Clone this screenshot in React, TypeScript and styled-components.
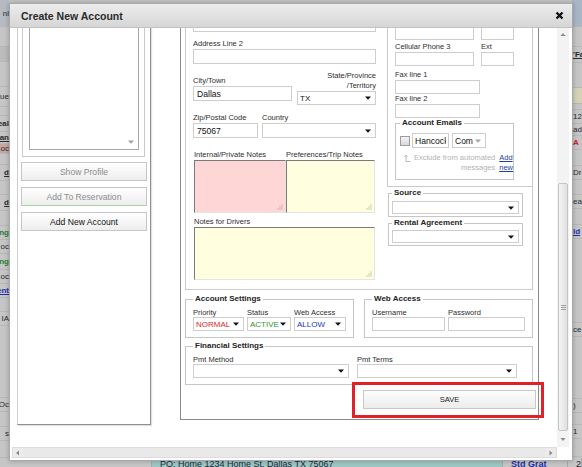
import React from 'react';
import styled, { createGlobalStyle } from 'styled-components';

const GlobalStyle = createGlobalStyle`
  * { box-sizing: border-box; }
  html, body { margin: 0; padding: 0; }
  body {
    width: 582px;
    height: 467px;
    overflow: hidden;
    background: #c6c6c6;
    font-family: 'Liberation Sans', Arial, sans-serif;
    color: #333;
  }
`;

const Screen = styled.div`
  position: relative;
  width: 582px;
  height: 467px;
  overflow: hidden;
  display: flex;
  flex-direction: column;
`;

/* ---------- app behind the modal ---------- */

const AppRow = styled.div`
  flex: 0 0 457px;
  display: flex;
  justify-content: space-between;
`;

const Strip = styled.div<{ $w: number }>`
  width: ${p => p.$w}px;
  display: flex;
  flex-direction: column;
  overflow: hidden;
`;

const StripRow = styled.div<{ $h: number; $bg?: string; $c?: string; $bold?: boolean; $u?: boolean; $end?: boolean }>`
  flex: 0 0 ${p => p.$h}px;
  display: flex;
  align-items: center;
  justify-content: ${p => (p.$end ? 'flex-end' : 'flex-start')};
  padding-left: ${p => (p.$end ? 0 : 1)}px;
  background: ${p => p.$bg || 'transparent'};
  border-bottom: 1px solid #b8b8b8;
  color: ${p => p.$c || '#2a2a2a'};
  font-size: 8px;
  font-weight: ${p => (p.$bold ? 700 : 400)};
  text-decoration: ${p => (p.$u ? 'underline' : 'none')};
  white-space: nowrap;
`;

const BottomBar = styled.div`
  flex: 0 0 10px;
  display: flex;
  font-size: 9px;
  line-height: 12px;
  white-space: nowrap;
  overflow: hidden;
`;

const BarCell = styled.div<{ $w: number; $bg: string; $c?: string; $bold?: boolean }>`
  flex: 0 0 ${p => p.$w}px;
  background: ${p => p.$bg};
  color: ${p => p.$c || '#1c2a3a'};
  font-weight: ${p => (p.$bold ? 700 : 400)};
  border-right: 1px solid #a9a9a9;
  padding: 0 0 0 8px;
  overflow: hidden;
`;

/* ---------- dialog frame ---------- */

const Dialog = styled.section`
  position: absolute;
  left: 9px;
  top: 3px;
  width: 564px;
  height: 458px;
  display: flex;
  flex-direction: column;
  background: #fff;
  border: 1px solid #a9a9a9;
  box-shadow: 0 0 5px rgba(0, 0, 0, 0.25);
`;

const TitleBar = styled.header`
  flex: 0 0 24px;
  display: flex;
  align-items: center;
  justify-content: space-between;
  padding: 0 8px 0 11px;
  background: linear-gradient(to bottom, #ececec, #d6d6d6);
  border-bottom: 1px solid #c2c2c2;
`;

const Title = styled.h1`
  margin: 0;
  font-size: 10.5px;
  font-weight: 700;
  color: #2b2b2b;
`;

const CloseButton = styled.button`
  border: 0;
  background: none;
  padding: 0;
  width: 9px;
  height: 9px;
  display: flex;
`;

const Body = styled.div`
  flex: 1;
  min-height: 0;
  display: grid;
  grid-template-columns: 1fr 12px;
  grid-template-rows: 1fr 11px;
  padding: 0 3px 2px 0;
`;

const Viewport = styled.div`
  overflow: hidden;
  min-height: 0;
`;

const Content = styled.div`
  display: flex;
  align-items: flex-start;
  margin-top: -41px;
  padding-left: 7px;
`;

/* ---------- scrollbars ---------- */

const VScroll = styled.div`
  display: flex;
  flex-direction: column;
  background: #f3f3f3;
`;

const ScrollArrow = styled.div`
  flex: 0 0 14px;
  display: flex;
  align-items: center;
  justify-content: center;
`;

const VTrack = styled.div`
  flex: 1;
  display: flex;
  flex-direction: column;
  padding: 141px 1px 1px;
`;

const VThumb = styled.div`
  height: 248px;
  border: 1px solid #c4c4c4;
  border-radius: 2px;
  background: linear-gradient(to right, #f4f4f4, #e0e0e0);
  display: flex;
  align-items: center;
  justify-content: center;
`;

const HScroll = styled.div`
  display: flex;
  align-items: stretch;
  margin-left: 2px;
  background: #ececec;
  border: 1px solid #dcdcdc;
`;

const HArrow = styled.div`
  flex: 0 0 10px;
  display: flex;
  align-items: center;
  justify-content: center;
`;

const HThumb = styled.div`
  flex: 1;
  background: #e9e9e9;
`;

const Corner = styled.div`
  background: #fff;
`;

/* ---------- left side panel ---------- */

const SidePanel = styled.aside`
  flex: 0 0 134px;
  height: 438px;
  border: 1px solid #cdcdcd;
  border-right-color: #8f8f8f;
  border-bottom-color: #8f8f8f;
  box-shadow: 1px 1px 1px rgba(0, 0, 0, 0.12);
  padding: 0 3px;
  display: flex;
  flex-direction: column;
`;

const ListFrame = styled.div`
  height: 169px;
  margin: 0 2px 0 1px;
  border: 1px solid #c9c9c9;
  padding: 6px 5px 6px 6px;
  display: flex;
`;

const ListBox = styled.div`
  flex: 1;
  border: 1px solid #a8a8a8;
  display: flex;
  align-items: flex-end;
  justify-content: flex-end;
  padding: 0 4px 5px 0;
`;

const ButtonStack = styled.div`
  display: flex;
  flex-direction: column;
  gap: 6px;
  margin-top: 5px;
`;

const SideButton = styled.button<{ $muted?: boolean; $accent?: boolean }>`
  height: 19px;
  padding: 0;
  border: 1px solid #c6c6c6;
  border-bottom-color: ${p => (p.$accent ? '#a9d6a0' : '#c6c6c6')};
  background: linear-gradient(to bottom, #ffffff, #ededed);
  font-family: 'Liberation Sans', Arial, sans-serif;
  font-size: 8.6px;
  color: ${p => (p.$muted ? '#8c8c8c' : '#111')};
`;

/* ---------- main form panel ---------- */

const FormPanel = styled.div`
  flex: 0 0 359px;
  margin-left: 29px;
  border: 1px solid #8a8a8a;
  padding: 0 5px 10px 4px;
  display: flex;
  flex-direction: column;
`;

const TopBox = styled.div`
  margin-top: 6px;
  border: 1px solid #cbcbcb;
  display: flex;
  gap: 11px;
`;

const AddressCol = styled.div`
  flex: 0 0 190px;
  padding: 12px 0 9px 7px;
  display: flex;
  flex-direction: column;
`;

const RightCol = styled.div`
  flex: 0 0 145px;
  display: flex;
  flex-direction: column;
  align-items: flex-start;
`;

const PhonesBox = styled.div`
  align-self: stretch;
  border-left: 1px solid #cbcbcb;
  border-bottom: 1px solid #cbcbcb;
  padding: 21px 0 6px 7px;
  display: flex;
  flex-direction: column;
  align-items: flex-start;
`;

const FieldRow = styled.div<{ $mt?: number; $gap?: number; $end?: boolean; $px?: number }>`
  display: flex;
  gap: ${p => p.$gap || 0}px;
  margin-top: ${p => p.$mt || 0}px;
  align-items: ${p => (p.$end ? 'flex-end' : 'flex-start')};
  padding: 0 ${p => p.$px || 0}px;
`;

const Field = styled.div<{ $w?: number; $mt?: number; $pb?: number }>`
  display: flex;
  flex-direction: column;
  flex-shrink: 0;
  width: ${p => (p.$w ? `${p.$w}px` : '100%')};
  margin-top: ${p => p.$mt || 0}px;
  padding-bottom: ${p => p.$pb || 0}px;
`;

const Label = styled.div<{ $right?: boolean; $h?: number }>`
  font-size: 7.5px;
  line-height: ${p => p.$h || 10}px;
  color: #2e2e2e;
  white-space: nowrap;
  text-align: ${p => (p.$right ? 'right' : 'left')};
`;

const TextInput = styled.input<{ $h?: number }>`
  display: block;
  width: 100%;
  height: ${p => p.$h || 15}px;
  margin: 0;
  padding: 0 3px;
  border: 1px solid #cdcdcd;
  background: #fff;
  font-family: 'Liberation Sans', Arial, sans-serif;
  font-size: 8.6px;
  color: #111;
  outline: none;
`;

const SelectBox = styled.div<{ $w?: number; $h?: number; $c?: string }>`
  flex-shrink: 0;
  width: ${p => (p.$w ? `${p.$w}px` : '100%')};
  height: ${p => p.$h || 14}px;
  border: 1px solid #cdcdcd;
  background: #fff;
  display: flex;
  align-items: center;
  gap: 1px;
  padding: 0 4px 0 2px;
  font-size: 8px;
  color: ${p => p.$c || '#111'};
  white-space: nowrap;
`;

const SelectValue = styled.span`
  flex: 1;
  min-width: 0;
  overflow: hidden;
`;

const NoteArea = styled.div<{ $bg: string; $h?: number }>`
  height: ${p => p.$h || 53}px;
  background: ${p => p.$bg};
  border: 1px solid #e4e4e4;
  border-top-color: #7a7a7a;
  border-left-color: #7a7a7a;
  display: flex;
  align-items: flex-end;
  justify-content: flex-end;
  padding: 0 2px 2px 0;
`;

const NotesGrid = styled.div`
  display: grid;
  grid-template-columns: 92px 89px;
  margin-top: 12px;
  padding-left: 1px;
`;

const GroupSet = styled.fieldset<{ $w?: number; $mt?: number; $ml?: number; $pad: string }>`
  margin: ${p => p.$mt || 0}px 0 0 ${p => p.$ml || 0}px;
  min-width: 0;
  flex-shrink: 0;
  width: ${p => (p.$w ? `${p.$w}px` : 'auto')};
  padding: ${p => p.$pad};
  border: 1px solid #c6c6c6;
`;

const Legend = styled.legend`
  padding: 0 2px;
  font-size: 8px;
  line-height: 10px;
  font-weight: 700;
  color: #242424;
`;

const CheckBox = styled.div`
  flex: 0 0 10px;
  height: 10px;
  margin-top: 3px;
  border: 1px solid #9d9d9d;
  background: linear-gradient(to bottom, #f3f3f3, #d9d9d9);
`;

const ExcludeRow = styled.div`
  display: flex;
  justify-content: flex-end;
  align-items: flex-start;
  gap: 4px;
  margin-top: 5px;
  margin-right: -2px;
  font-size: 7.5px;
  line-height: 10px;
`;

const ExcludeNote = styled.div`
  display: flex;
  gap: 3px;
  color: #b3b3b3;
  text-align: right;
`;

const SmallLink = styled.a`
  color: #1d3fa6;
  text-decoration: underline;
  text-align: left;
`;

const SettingsRow = styled.div`
  display: flex;
  gap: 10px;
  margin-top: 4px;
`;

const SaveRow = styled.div`
  display: flex;
  justify-content: flex-end;
  margin: 5px -3px 0 0;
`;

const SaveButton = styled.button`
  position: relative;
  width: 173px;
  height: 19px;
  padding: 0;
  border: 1px solid #c8c8c8;
  background: linear-gradient(to bottom, #fdfdfd, #ececec);
  font-family: 'Liberation Sans', Arial, sans-serif;
  font-size: 7.6px;
  color: #222;

  &::after {
    content: '';
    position: absolute;
    top: -9px;
    left: -12px;
    right: -9px;
    bottom: -10px;
    border: 3px solid #e2202a;
    pointer-events: none;
  }
`;

/* ---------- small drawings ---------- */

const Caret = ({ color = '#111' }: { color?: string }) => (
  <svg width="6" height="4" viewBox="0 0 6 4" style={{ flexShrink: 0 }}>
    <path d="M0 0.5h6L3 3.8z" fill={color} />
  </svg>
);

const Tri = ({ dir }: { dir: 'up' | 'down' | 'left' | 'right' }) => {
  const d = {
    up: 'M0.5 4L3 1L5.5 4z',
    down: 'M0.5 1L3 4L5.5 1z',
    left: 'M4 0.5L1 3L4 5.5z',
    right: 'M1.5 0.5L4.5 3L1.5 5.5z',
  }[dir];
  return (
    <svg width="6" height="6" viewBox="0 0 6 6">
      <path d={d} fill="#8a8a8a" />
    </svg>
  );
};

const Grip = () => (
  <svg width="6" height="6" viewBox="0 0 6 6" fill="#9a9a9a">
    <rect x="4.5" y="0.5" width="1" height="1" />
    <rect x="2.5" y="2.5" width="1" height="1" />
    <rect x="4.5" y="2.5" width="1" height="1" />
    <rect x="0.5" y="4.5" width="1" height="1" />
    <rect x="2.5" y="4.5" width="1" height="1" />
    <rect x="4.5" y="4.5" width="1" height="1" />
  </svg>
);

const ReturnArrow = () => (
  <svg width="7" height="8" viewBox="0 0 7 8" style={{ marginTop: 1 }}>
    <path d="M2 7.5V1.2M0.6 2.6L2 1.1L3.4 2.6M2 7.5H6.5" stroke="#b0b0b0" strokeWidth="0.9" fill="none" />
  </svg>
);

const CloseIcon = () => (
  <svg width="9" height="9" viewBox="0 0 9 9">
    <path d="M1.5 1.5L7.5 7.5M7.5 1.5L1.5 7.5" stroke="#111" strokeWidth="2.3" />
  </svg>
);

const ThumbGrip = () => (
  <svg width="5" height="5" viewBox="0 0 5 5">
    <path d="M0 0.5H5M0 2.5H5M0 4.5H5" stroke="#8d8d8d" strokeWidth="0.8" />
  </svg>
);

/* ---------- data for the background ---------- */

type StripItem = { h: number; t?: string; bg?: string; c?: string; bold?: boolean; u?: boolean };

const leftRows: StripItem[] = [
  { h: 27, t: 'nl', bg: '#b6bbc3' },
  { h: 20 },
  { h: 15, bg: '#bcbcbc' },
  { h: 25 },
  { h: 20, t: 'ue' },
  { h: 9 },
  { h: 16, t: 'eal', bold: true },
  { h: 12, t: 'an', bold: true, u: true },
  { h: 9, t: 'oc', bg: '#c8a7a2' },
  { h: 11 },
  { h: 16, t: 'd', bold: true, u: true },
  { h: 14 },
  { h: 16, t: 'd', bold: true, u: true },
  { h: 15 },
  { h: 14, t: 'ng', c: '#2a7d2a', bold: true },
  { h: 14, t: 'oc' },
  { h: 16, t: 'ng', c: '#2a7d2a', bold: true },
  { h: 14, t: 'oc' },
  { h: 14, t: 'ent', c: '#1f2fa8', bold: true, u: true },
  { h: 14 },
  { h: 14, t: 'IA' },
  { h: 72 },
  { h: 14, t: 'Oc' },
  { h: 15 },
  { h: 14, t: 's' },
  { h: 17 },
];

const rightRows: StripItem[] = [
  { h: 27, bg: '#a9b6c6' },
  { h: 20 },
  { h: 16, t: "'Fa", bold: true, u: true },
  { h: 25 },
  { h: 16, bg: '#d5d2b8' },
  { h: 6 },
  { h: 14, t: '12' },
  { h: 12, t: 'ad' },
  { h: 14, t: 'A', c: '#c62020', bold: true },
  { h: 16 },
  { h: 14, t: 'Dr' },
  { h: 15 },
  { h: 14, t: 'ea' },
  { h: 16 },
  { h: 14, t: 'ld', c: '#1f2fa8', bold: true, u: true },
  { h: 84 },
  { h: 14, t: 'ce' },
  { h: 62 },
  { h: 14, t: ')' },
  { h: 12 },
  { h: 14, t: '1' },
  { h: 18 },
];

const App = () => {
  return (
    <Screen>
      <GlobalStyle />

      <AppRow>
        <Strip $w={9}>
          {leftRows.map((r, i) => (
            <StripRow key={i} $h={r.h} $bg={r.bg} $c={r.c} $bold={r.bold} $u={r.u} $end>
              {r.t}
            </StripRow>
          ))}
        </Strip>
        <Strip $w={10}>
          {rightRows.map((r, i) => (
            <StripRow key={i} $h={r.h} $bg={r.bg} $c={r.c} $bold={r.bold} $u={r.u}>
              {r.t}
            </StripRow>
          ))}
        </Strip>
      </AppRow>
      <BottomBar>
        <BarCell $w={152} $bg="#c6c6c6" />
        <BarCell $w={351} $bg="#9cc7c3">PO: Home 1234 Home St. Dallas TX 75067</BarCell>
        <BarCell $w={65} $bg="#c6c6c6" $c="#1f2fa8" $bold>Std Grat</BarCell>
        <BarCell $w={14} $bg="#c6c6c6">20</BarCell>
      </BottomBar>

      <Dialog>
        <TitleBar>
          <Title>Create New Account</Title>
          <CloseButton aria-label="Close">
            <CloseIcon />
          </CloseButton>
        </TitleBar>

        <Body>
          <Viewport>
            <Content>
              <SidePanel>
                <ListFrame>
                  <ListBox>
                    <Caret color="#a0a0a0" />
                  </ListBox>
                </ListFrame>
                <ButtonStack>
                  <SideButton $muted>Show Profile</SideButton>
                  <SideButton $muted $accent>Add To Reservation</SideButton>
                  <SideButton>Add New Account</SideButton>
                </ButtonStack>
              </SidePanel>

              <FormPanel>
                <TopBox>
                  <AddressCol>
                    <Field>
                      <Label>Address Line 1</Label>
                      <TextInput readOnly defaultValue="" />
                    </Field>
                    <Field $mt={7}>
                      <Label>Address Line 2</Label>
                      <TextInput readOnly defaultValue="" />
                    </Field>
                    <FieldRow $mt={7} $gap={5} $end>
                      <Field $w={99} $pb={4}>
                        <Label>City/Town</Label>
                        <TextInput readOnly defaultValue="Dallas" />
                      </Field>
                      <Field $w={79}>
                        <Label $right>State/Province</Label>
                        <Label $right>/Territory</Label>
                        <SelectBox>
                          <SelectValue>TX</SelectValue>
                          <Caret />
                        </SelectBox>
                      </Field>
                    </FieldRow>
                    <FieldRow $mt={8} $gap={4}>
                      <Field $w={65}>
                        <Label>Zip/Postal Code</Label>
                        <TextInput readOnly defaultValue="75067" />
                      </Field>
                      <Field $w={114}>
                        <Label>Country</Label>
                        <SelectBox $h={15}>
                          <SelectValue />
                          <Caret />
                        </SelectBox>
                      </Field>
                    </FieldRow>
                    <NotesGrid>
                      <Label>Internal/Private Notes</Label>
                      <Label>Preferences/Trip Notes</Label>
                      <NoteArea $bg="#ffd6d6">
                        <Grip />
                      </NoteArea>
                      <NoteArea $bg="#ffffdf">
                        <Grip />
                      </NoteArea>
                    </NotesGrid>
                    <FieldRow $mt={4} $px={1}>
                      <Field>
                        <Label>Notes for Drivers</Label>
                        <NoteArea $bg="#ffffdf">
                          <Grip />
                        </NoteArea>
                      </Field>
                    </FieldRow>
                  </AddressCol>

                  <RightCol>
                    <PhonesBox>
                      <FieldRow $gap={7}>
                        <Field $w={79}>
                          <Label>Cellular Phone 2</Label>
                          <TextInput readOnly $h={14} />
                        </Field>
                        <Field $w={33}>
                          <Label>Ext</Label>
                          <TextInput readOnly $h={14} />
                        </Field>
                      </FieldRow>
                      <FieldRow $gap={7} $mt={2}>
                        <Field $w={79}>
                          <Label>Cellular Phone 3</Label>
                          <TextInput readOnly $h={14} />
                        </Field>
                        <Field $w={33}>
                          <Label>Ext</Label>
                          <TextInput readOnly $h={14} />
                        </Field>
                      </FieldRow>
                      <Field $w={85} $mt={4}>
                        <Label>Fax line 1</Label>
                        <TextInput readOnly $h={14} />
                      </Field>
                      <Field $w={85}>
                        <Label>Fax line 2</Label>
                        <TextInput readOnly $h={14} />
                      </Field>
                      <GroupSet $w={119} $pad="5px 2px 6px 4px">
                        <Legend>Account Emails</Legend>
                        <FieldRow $gap={2}>
                          <CheckBox />
                          <Field $w={37}>
                            <TextInput readOnly defaultValue="Hancock" $h={15} style={{ padding: '0 2px' }} />
                          </Field>
                          <SelectBox $w={34} $h={15} style={{ marginLeft: 1, fontSize: 8.5 }}>
                            <SelectValue>Com</SelectValue>
                            <Caret color="#a5a5a5" />
                          </SelectBox>
                        </FieldRow>
                        <ExcludeRow>
                          <ExcludeNote>
                            <ReturnArrow />
                            <span>
                              Exclude from automated
                              <br />
                              messages
                            </span>
                          </ExcludeNote>
                          <SmallLink>
                            Add
                            <br />
                            new
                          </SmallLink>
                        </ExcludeRow>
                      </GroupSet>
                    </PhonesBox>

                    <GroupSet $w={135} $mt={1} $ml={1} $pad="3px 3px 2px">
                      <Legend>Source</Legend>
                      <SelectBox $h={13}>
                        <SelectValue />
                        <Caret />
                      </SelectBox>
                    </GroupSet>
                    <GroupSet $w={135} $mt={1} $ml={1} $pad="2px 3px 2px">
                      <Legend>Rental Agreement</Legend>
                      <SelectBox $h={13}>
                        <SelectValue />
                        <Caret />
                      </SelectBox>
                    </GroupSet>
                  </RightCol>
                </TopBox>

                <SettingsRow>
                  <GroupSet $w={169} $pad="4px 7px 6px">
                    <Legend>Account Settings</Legend>
                    <FieldRow $gap={3}>
                      <Field $w={51}>
                        <Label $h={9}>Priority</Label>
                        <SelectBox $c="#e0242c">
                          <SelectValue>NORMAL</SelectValue>
                          <Caret />
                        </SelectBox>
                      </Field>
                      <Field $w={44}>
                        <Label $h={9}>Status</Label>
                        <SelectBox $c="#2a9a2a">
                          <SelectValue>ACTIVE</SelectValue>
                          <Caret />
                        </SelectBox>
                      </Field>
                      <Field $w={52}>
                        <Label $h={9}>Web Access</Label>
                        <SelectBox $c="#2233c8">
                          <SelectValue>ALLOW</SelectValue>
                          <Caret />
                        </SelectBox>
                      </Field>
                    </FieldRow>
                  </GroupSet>
                  <GroupSet $w={169} $pad="4px 7px 6px">
                    <Legend>Web Access</Legend>
                    <FieldRow $gap={3}>
                      <Field $w={73}>
                        <Label $h={9}>Username</Label>
                        <TextInput readOnly $h={14} />
                      </Field>
                      <Field $w={77}>
                        <Label $h={9}>Password</Label>
                        <TextInput readOnly $h={14} />
                      </Field>
                    </FieldRow>
                  </GroupSet>
                </SettingsRow>

                <GroupSet $mt={3} $pad="4px 7px 6px">
                  <Legend>Financial Settings</Legend>
                  <FieldRow $gap={8}>
                    <Field $w={156}>
                      <Label $h={9}>Pmt Method</Label>
                      <SelectBox>
                        <SelectValue />
                        <Caret />
                      </SelectBox>
                    </Field>
                    <Field $w={160}>
                      <Label $h={9}>Pmt Terms</Label>
                      <SelectBox>
                        <SelectValue />
                        <Caret />
                      </SelectBox>
                    </Field>
                  </FieldRow>
                </GroupSet>

                <SaveRow>
                  <SaveButton>SAVE</SaveButton>
                </SaveRow>
              </FormPanel>
            </Content>
          </Viewport>

          <VScroll>
            <ScrollArrow>
              <Tri dir="up" />
            </ScrollArrow>
            <VTrack>
              <VThumb>
                <ThumbGrip />
              </VThumb>
            </VTrack>
            <ScrollArrow>
              <Tri dir="down" />
            </ScrollArrow>
          </VScroll>

          <HScroll>
            <HArrow>
              <Tri dir="left" />
            </HArrow>
            <HThumb />
            <HArrow>
              <Tri dir="right" />
            </HArrow>
          </HScroll>
          <Corner />
        </Body>
      </Dialog>
    </Screen>
  );
};

export default App;
